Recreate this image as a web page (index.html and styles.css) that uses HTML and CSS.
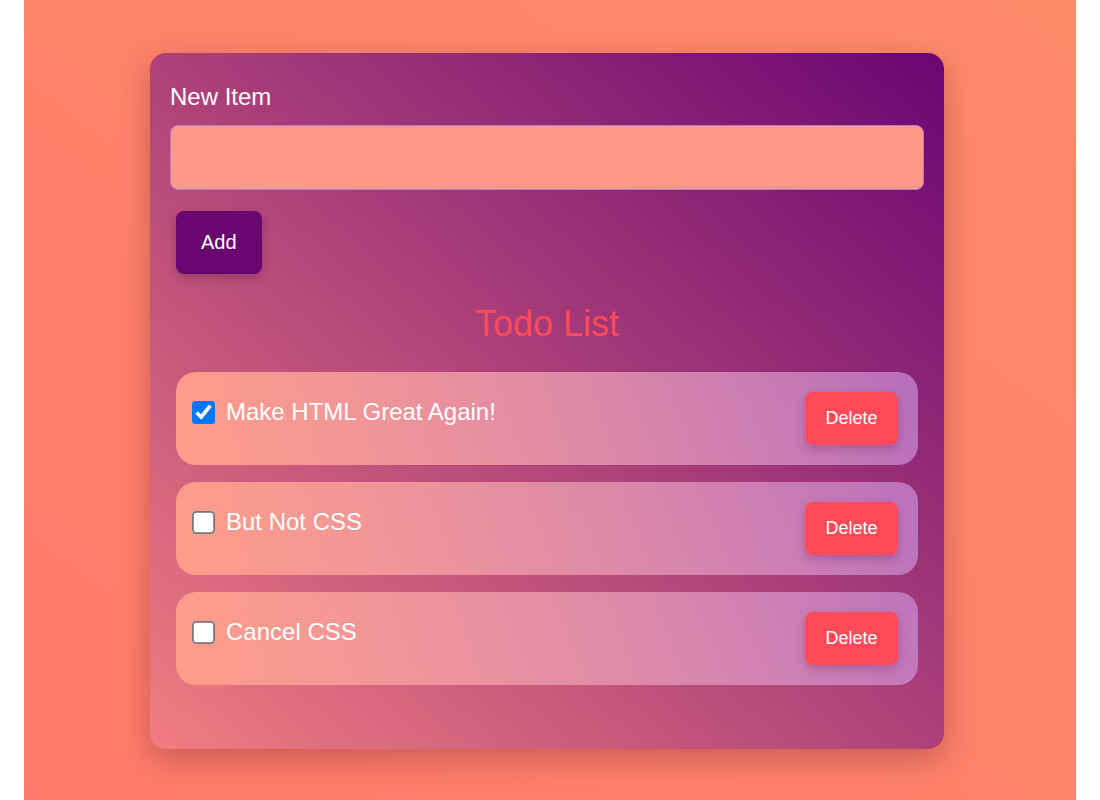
FILE: index.html
```html
<!DOCTYPE html>
<html lang="en">
<head>
<meta charset="utf-8">
<title>Todo List</title>
<link rel="stylesheet" href="styles.css">
</head>
<body>
<main class="card">
  <label class="field-label" for="new-item">New Item</label>
  <input class="field-input" id="new-item" type="text">
  <button class="add-btn" type="button">Add</button>
  <h1 class="list-title">Todo List</h1>
  <ul class="todo-list">
    <li class="todo-item">
      <label class="todo-label"><input type="checkbox" class="todo-check" checked><span>Make HTML Great Again!</span></label>
      <button class="delete-btn" type="button">Delete</button>
    </li>
    <li class="todo-item">
      <label class="todo-label"><input type="checkbox" class="todo-check"><span>But Not CSS</span></label>
      <button class="delete-btn" type="button">Delete</button>
    </li>
    <li class="todo-item">
      <label class="todo-label"><input type="checkbox" class="todo-check"><span>Cancel CSS</span></label>
      <button class="delete-btn" type="button">Delete</button>
    </li>
  </ul>
</main>
</body>
</html>
```

FILE: styles.css
```css
html {
  background: #ffffff;
}
body {
  margin: 0 24px;
  min-height: 800px;
  background: linear-gradient(to bottom left, #ff8a6a, #ff7a6a);
  font-family: "Liberation Sans", Arial, sans-serif;
  color: #ffffff;
  overflow: hidden;
}
.card {
  box-sizing: border-box;
  width: 794px;
  height: 696px;
  margin: 53px 0 0 126px;
  display: inline-flex;
  flex-direction: column;
  align-items: stretch;
  padding: 30px 20px 20px;
  border-radius: 16px;
  background: linear-gradient(to top right, #ef7d80, #6a0572);
  box-shadow: 0 10px 30px rgba(60, 0, 30, 0.28);
}
.field-label {
  font-size: 24px;
  line-height: 27px;
  margin-bottom: 15px;
}
.field-input {
  box-sizing: border-box;
  height: 65px;
  margin: 0;
  border: 1px solid #b27bc4;
  border-radius: 8px;
  background: #ff9888;
  font: inherit;
  color: #fff;
  padding: 0 12px;
}
.add-btn {
  align-self: flex-start;
  margin: 21px 0 0 6px;
  padding: 20px 25px;
  border: none;
  border-radius: 8px;
  background: #6a056f;
  color: #fff;
  font-family: inherit;
  font-size: 20px;
  line-height: 23px;
  box-shadow: 0 4px 10px rgba(0, 0, 0, 0.2);
}
.list-title {
  margin: 29px 0 0;
  text-align: center;
  font-size: 36px;
  line-height: 41px;
  font-weight: normal;
  color: #ff4a5a;
}
.todo-list {
  list-style: none;
  margin: 28px 6px 0;
  padding: 0;
  display: flex;
  flex-direction: column;
  gap: 17px;
}
.todo-item {
  display: flex;
  justify-content: space-between;
  align-items: center;
  padding: 20px 20px 20px 16px;
  border-radius: 20px;
  background: linear-gradient(80deg, #ff9d8a, rgba(205, 150, 225, 0.65));
}
.todo-label {
  align-self: flex-start;
  margin-top: 6px;
  display: flex;
  align-items: center;
  gap: 12px;
  font-size: 24px;
  line-height: 28px;
}
.todo-check {
  width: 13px;
  height: 13px;
  margin: 5px;
  transform: scale(1.77);
}
.todo-label span {
  margin-left: -1px;
}
.delete-btn {
  padding: 16px 20.5px;
  border: none;
  border-radius: 8px;
  background: #ff4a5a;
  color: #fff;
  font-family: inherit;
  font-size: 18px;
  line-height: 21px;
  box-shadow: 0 4px 10px rgba(80, 0, 60, 0.25);
}
```
